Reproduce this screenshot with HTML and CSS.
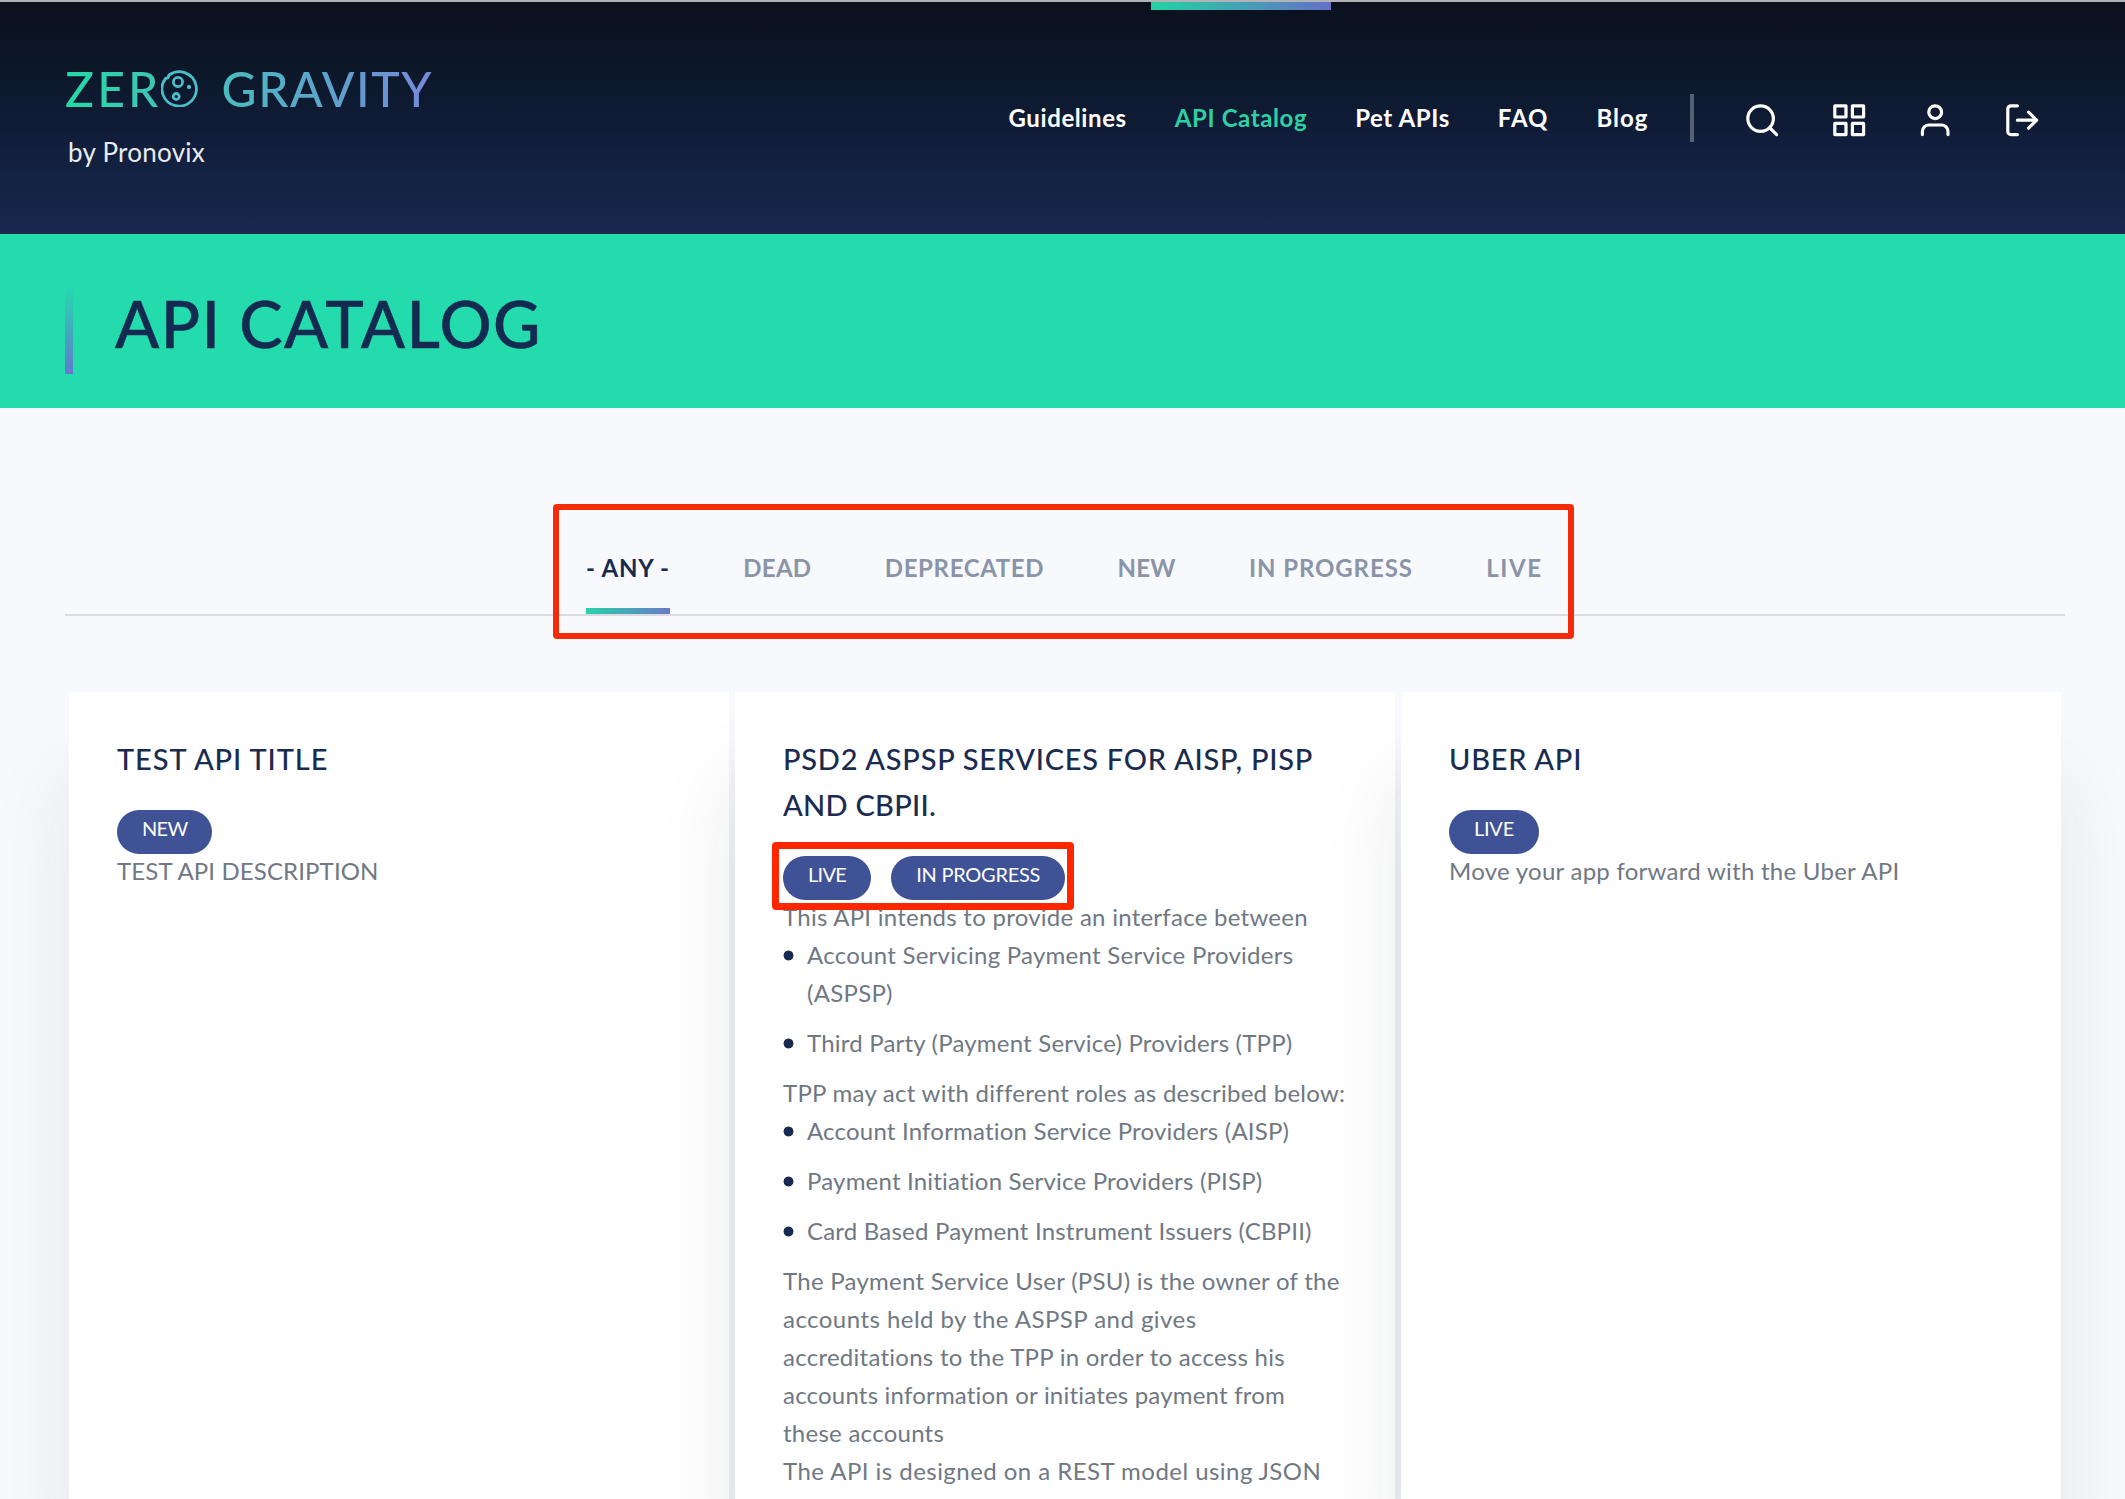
FILE: index.html
```html
<!DOCTYPE html>
<html lang="en">
<head>
<meta charset="utf-8">
<title>API Catalog | Zero Gravity</title>
<link rel="stylesheet" href="styles.css">
</head>
<body>
<header class="header">
  <a class="logo">
    <span class="logo-name">
      <span class="logo-zer">ZER</span>
      <svg class="logo-moon" viewBox="0 0 37 37" fill="none" stroke="#4dbcc6" stroke-width="2.8">
        <path d="M8 5A17.200 17.200 0 1 1 4.600 8.300Q7.500 8.600 8 5z"/>
        <circle cx="17" cy="12" r="4.600"/>
        <circle cx="15.200" cy="26.500" r="3"/>
        <circle cx="28" cy="17" r="1.700" fill="#4dbcc6" stroke-width="1"/>
      </svg>
      <span class="logo-gravity">GRAVITY</span>
    </span>
    <span class="logo-by">by Pronovix</span>
  </a>
  <nav class="nav">
    <a class="nav-link">Guidelines</a>
    <a class="nav-link active">API Catalog</a>
    <a class="nav-link">Pet APIs</a>
    <a class="nav-link short">FAQ</a>
    <a class="nav-link short">Blog</a>
  </nav>
  <div class="tools">
    <svg class="icon" viewBox="0 0 24 24"><circle cx="11" cy="11" r="8"/><path d="M21 21l-4.350-4.350"/></svg>
    <svg class="icon" viewBox="0 0 24 24"><path d="M3 3h7v7H3zM14 3h7v7h-7zM14 14h7v7h-7zM3 14h7v7H3z"/></svg>
    <svg class="icon" viewBox="0 0 24 24"><path d="M20 21v-2a4 4 0 0 0-4-4H8a4 4 0 0 0-4 4v2"/><circle cx="12" cy="7" r="4"/></svg>
    <svg class="icon" viewBox="0 0 24 24"><path d="M9 21H5a2 2 0 0 1-2-2V5a2 2 0 0 1 2-2h4M16 17l5-5-5-5M21 12H9"/></svg>
  </div>
</header>

<section class="banner">
  <h1 class="banner-title">API CATALOG</h1>
</section>

<main class="main">
  <div class="tabs">
    <a class="tab tab-any active">- ANY -</a>
    <a class="tab tab-dead">DEAD</a>
    <a class="tab tab-deprecated">DEPRECATED</a>
    <a class="tab tab-new">NEW</a>
    <a class="tab tab-progress">IN PROGRESS</a>
    <a class="tab tab-live">LIVE</a>
    <span class="mark mark-tabs"></span>
  </div>

  <div class="cards">
    <article class="card">
      <h2 class="card-title airy">TEST API TITLE</h2>
      <div class="badges"><span class="badge">NEW</span></div>
      <p class="caps">TEST API DESCRIPTION</p>
    </article>
    <article class="card">
      <h2 class="card-title">PSD2 ASPSP SERVICES FOR AISP, PISP<br><span class="tight">AND CBPII.</span></h2>
      <div class="badges">
        <span class="badge">LIVE</span>
        <span class="badge wide">IN PROGRESS</span>
        <span class="mark mark-badges"></span>
      </div>
      <p>This API intends to provide an interface between</p>
      <ul>
        <li>Account Servicing Payment Service Providers<br>(ASPSP)</li>
        <li class="snug">Third Party (Payment Service) Providers (TPP)</li>
      </ul>
      <p>TPP may act with different roles as described below:</p>
      <ul>
        <li class="snug">Account Information Service Providers (AISP)</li>
        <li class="snug">Payment Initiation Service Providers (PISP)</li>
        <li class="snug">Card Based Payment Instrument Issuers (CBPII)</li>
      </ul>
      <p>The Payment Service User (PSU) is the owner of the<br><span class="loose">accounts held by the ASPSP and gives</span><br>accreditations to the TPP in order to access his<br><span class="snug">accounts information or initiates payment from</span><br>these accounts</p>
      <p class="loose">The API is designed on a REST model using JSON</p>
    </article>
    <article class="card">
      <h2 class="card-title">UBER API</h2>
      <div class="badges"><span class="badge wide">LIVE</span></div>
      <p>Move your app forward with the Uber API</p>
    </article>
  </div>
</main>
</body>
</html>
```
FILE: styles.css
```css
* { box-sizing: border-box; }

body {
  margin: 0;
  height: 1499px;
  overflow: hidden;
  background: #f8f9fd;
  color: #6f7883;
  font: 400 24px/38px Lato, "Open Sans", sans-serif;
  letter-spacing: 0.26px;
}

h1, h2, p, ul { margin: 0; padding: 0; }

/* Header */
.header {
  display: flex;
  height: 234px;
  padding: 0 84px 0 65px;
  border-top: 2px solid #b1b3b7;
  background: linear-gradient(#0a101e, #0c1728 27%, #121f3e 66%, #17284f);
}

.logo {
  display: flex;
  flex-direction: column;
  padding-top: 63px;
  margin-right: auto;
}

.logo-name {
  display: flex;
  align-items: flex-start;
  font-size: 48px;
  line-height: 48px;
}

.logo-zer,
.logo-gravity {
  color: transparent;
  -webkit-background-clip: text;
  background-clip: text;
}

.logo-zer {
  font-weight: 500;
  letter-spacing: 3.2px;
  background-image: linear-gradient(90deg, #22dba6, #41c3b6);
}

.logo-moon {
  width: 37px;
  height: 37px;
  margin: 5px 24px 0 -1px;
}

.logo-gravity {
  font-weight: 500;
  letter-spacing: 1.61px;
  background-image: linear-gradient(90deg, #4bbcc0, #5fa0cc 55%, #7988dc);
}

.logo-by {
  margin: 23px 0 0 3px;
  color: #e9ebf0;
  font-size: 26px;
  line-height: 32px;
}

.nav {
  display: flex;
  margin-right: 18px;
}

.nav-link {
  position: relative;
  padding: 97px 24px 0;
  color: #fff;
  font-weight: 700;
  letter-spacing: 0.6px;
}

.nav-link.short { letter-spacing: 1px; }
.nav-link.active { color: #2fcfa5; }

.nav-link.active::before {
  content: "";
  position: absolute;
  top: 0;
  left: 0;
  width: 100%;
  height: 8px;
  background: linear-gradient(90deg, #22d3a2, #6670c8);
}

.tools {
  display: flex;
  align-self: flex-start;
  gap: 48px;
  height: 48px;
  margin-top: 92px;
  padding: 7px 0 0 49px;
  border-left: 4px solid #565f74;
}

.icon {
  width: 38.4px;
  height: 38.4px;
  fill: none;
  stroke: #fff;
  stroke-width: 2;
  stroke-linecap: round;
  stroke-linejoin: round;
}

/* Page title */
.banner {
  height: 174px;
  padding: 52px 65px 0;
  background: #24dbae;
}

.banner-title {
  height: 88px;
  padding-left: 50px;
  background: linear-gradient(#24dbae, #6478cf) no-repeat 0 0 / 8px 88px;
  color: #142a50;
  font-size: 65px;
  font-weight: 500;
  line-height: 75px;
  letter-spacing: 1.46px;
  -webkit-text-stroke: 0.5px #142a50;
}

/* Status tabs */
.main { padding: 141px 60px 0 65px; }

.tabs {
  position: relative;
  display: flex;
  justify-content: center;
  gap: 73.400px;
  padding-right: 1.500px;
  border-bottom: 2px solid #dadce1;
  color: #8a94a7;
  font-weight: 700;
}

.tab { padding-bottom: 27px; }
.tab-any { letter-spacing: 0.78px; }
.tab-dead { letter-spacing: 0.3px; }
.tab-deprecated { letter-spacing: 0.62px; }
.tab-new { letter-spacing: 0.2px; }
.tab-progress { letter-spacing: 0.9px; }
.tab-live { letter-spacing: 1.6px; }

.tab.active {
  color: #182a50;
  background: linear-gradient(90deg, #28d2a8, #6a7acb) no-repeat 0 100% / 100% 6px;
}

/* Highlight frames */
.mark {
  position: absolute;
  border: 6px solid #f42c0c;
  border-radius: 4px;
}

.mark-tabs {
  top: -45px;
  left: 488px;
  width: 1021px;
  height: 135px;
}

.mark-badges {
  top: -14.500px;
  left: -11px;
  width: 302px;
  height: 68px;
  border-width: 7px;
  border-color: #ff2600;
}

/* Cards */
.cards {
  display: grid;
  grid-template-columns: repeat(3, 1fr);
  gap: 6px;
  padding: 76px 4px 0;
}

.card {
  height: 807px;
  padding: 44px 48px 0;
  background: #fff;
  box-shadow: 0 84px 80px rgba(24, 28, 30, 0.09);
}

.card-title {
  margin-bottom: 28px;
  color: #1a2b50;
  font-size: 29px;
  font-weight: 500;
  line-height: 46px;
  letter-spacing: 0.75px;
  white-space: nowrap;
}

.airy { letter-spacing: 0.9px; }
.tight { letter-spacing: 0.28px; }
.loose { letter-spacing: 0.46px; }
.snug { letter-spacing: 0.2px; }
.caps { letter-spacing: 0.12px; }

.badges {
  position: relative;
  display: flex;
  gap: 20px;
  margin-bottom: -2px;
}

.badge {
  height: 44px;
  padding: 0 25px;
  border-radius: 22px;
  background: #3f5295;
  color: #fff;
  font-size: 20px;
  line-height: 36px;
  letter-spacing: -0.7px;
}

.badge.wide { letter-spacing: -0.25px; }

.card p { white-space: nowrap; }

.card li {
  margin-bottom: 12px;
  padding-left: 24px;
  list-style: none;
  background: radial-gradient(circle at 5.500px 5.500px, #182a50 4.600px, transparent 5.300px) no-repeat 0 13.500px / 12px 12px;
}
```
